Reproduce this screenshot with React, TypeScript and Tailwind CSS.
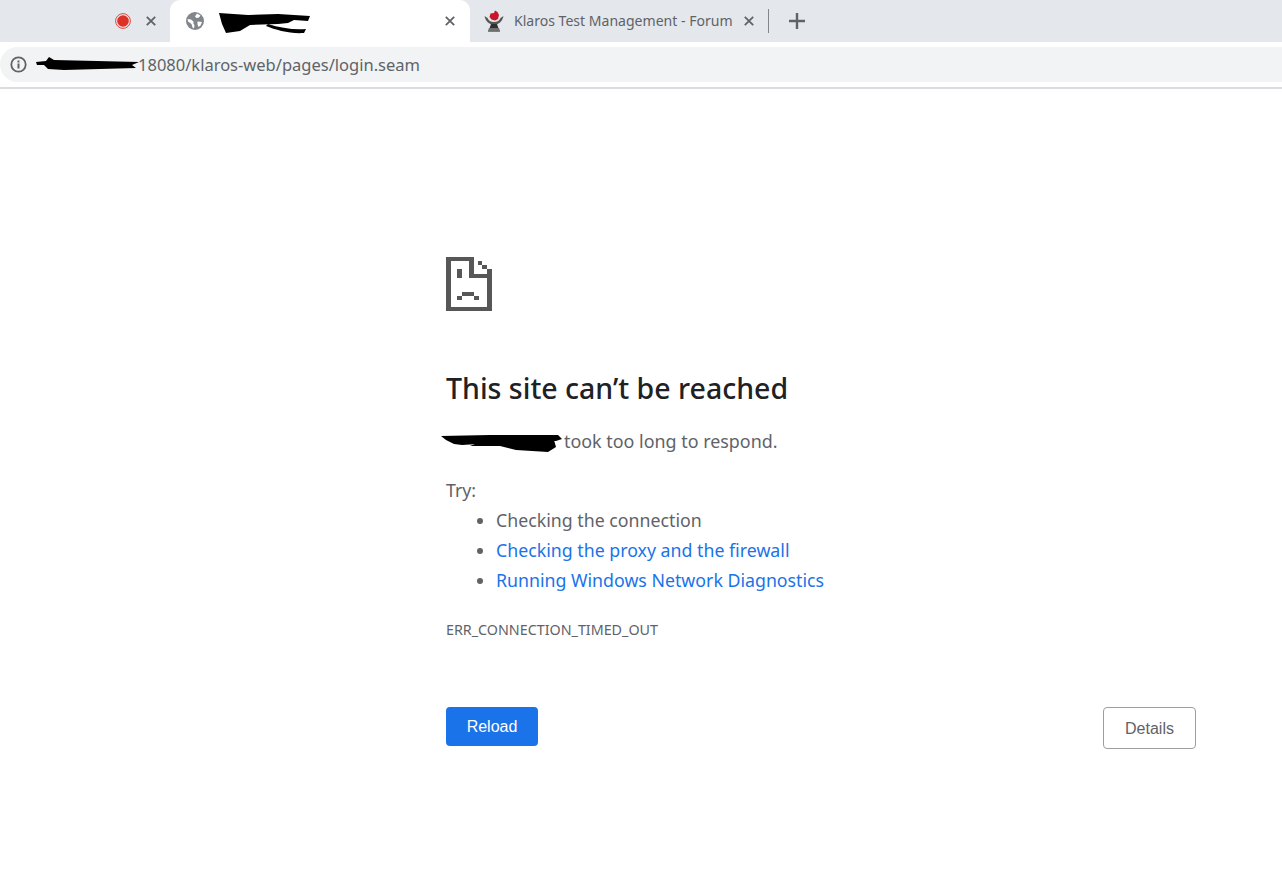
import React from "react";

const bodyFont = "font-['Noto_Sans','Open_Sans',sans-serif]";

function CloseIcon({ className = "" }: { className?: string }) {
  return (
    <svg width="10" height="10" viewBox="0 0 10 10" className={className}>
      <path d="M0.8 0.8 L9.2 9.2 M9.2 0.8 L0.8 9.2" stroke="#5f6368" strokeWidth="1.8" fill="none" />
    </svg>
  );
}

function RecordIcon() {
  return (
    <svg width="16" height="16" viewBox="0 0 16 16">
      <circle cx="8" cy="8" r="7.4" fill="none" stroke="#e8453c" strokeWidth="1" />
      <circle cx="8" cy="8" r="5.8" fill="#dd3126" />
    </svg>
  );
}

function GlobeIcon() {
  return (
    <svg width="18" height="18" viewBox="0 0 18 18">
      <circle cx="9" cy="9" r="9" fill="#80868b" />
      <path d="M1.5 7 L5 7.5 L7.5 9.5 L7.5 12 L8.5 13 L8 16.5 L6.5 15.5 L5.5 12 L2 9.5 Z" fill="#fff" />
      <path d="M11 1.5 L14.5 3.5 L13 5.5 L10.5 6 L9 4.5 Z M11.5 9.5 L16 10 L14.5 13.5 L12.5 15 L11.5 12.5 Z" fill="#fff" />
    </svg>
  );
}

function KlarosIcon() {
  return (
    <svg width="20" height="22" viewBox="0 0 20 22">
      <path d="M0.5 6 C1.5 11 5 14.5 10 14.5 C15 14.5 18.5 11 19.5 6 L16.5 8 C15 11 13 12 10 12 C7 12 5 11 3.5 8 Z" fill="#555" />
      <path d="M7 14 L13 14 L14 17 L16 21.5 L4 21.5 L6 17 Z" fill="#2f2f2f" />
      <path d="M5 18 L15 18 L16 21.5 L4 21.5 Z" fill="#707070" />
      <path d="M6.5 3.5 L10 3 L11 0.5 L13.5 2 L15 5 L14 9 L11 10.5 L7.5 9.5 L5.5 7 Z" fill="#c8172b" />
    </svg>
  );
}

function InfoIcon() {
  return (
    <svg width="17" height="17" viewBox="0 0 17 17">
      <circle cx="8.5" cy="8.5" r="7.2" fill="none" stroke="#5f6368" strokeWidth="1.8" />
      <rect x="7.5" y="7.5" width="2" height="5" fill="#5f6368" />
      <rect x="7.5" y="4.5" width="2" height="2" fill="#5f6368" />
    </svg>
  );
}

function SadFile() {
  return (
    <svg width="46" height="54" viewBox="0 0 46 54" fill="#575757" shapeRendering="crispEdges">
      <rect x="0" y="0" width="28" height="4" />
      <rect x="0" y="0" width="5" height="54" />
      <rect x="0" y="50" width="46" height="4" />
      <rect x="41" y="16" width="5" height="38" />
      <rect x="23" y="0" width="5" height="21" />
      <rect x="23" y="17" width="23" height="4" />
      <rect x="32" y="4" width="4" height="4" />
      <rect x="36" y="8" width="5" height="4" />
      <rect x="41" y="12" width="5" height="4" />
      <rect x="11" y="12" width="5" height="9" />
      <rect x="16" y="35" width="12" height="4" />
      <rect x="11" y="39" width="5" height="4" />
      <rect x="28" y="39" width="5" height="4" />
    </svg>
  );
}

function TabTitleScribble() {
  return (
    <svg width="94" height="22" viewBox="0 0 94 22">
      <path d="M1 1 L30 3 L60 2 L92 4 L90 9 L76 8 L70 11 L60 12 L32 13 L22 19 L8 21 L4 12 Z" fill="#000" />
      <path d="M50 12 C62 16 76 18 88 17 L86 21 C72 22 58 18 48 14 Z" fill="#000" />
    </svg>
  );
}

function UrlScribble() {
  return (
    <svg width="104" height="18" viewBox="0 0 104 18">
      <path d="M0 6 L10 5 L13 1 L18 4 L103 6 L96 9 L100 12 L28 14 L12 13 L8 9 L1 9 Z" fill="#000" />
    </svg>
  );
}

function HostScribble() {
  return (
    <svg width="122" height="22" viewBox="0 0 122 22">
      <path d="M1 3 L50 2 L118 2 L122 6 L116 8 L70 9 L22 12 L14 11 L6 7 Z" fill="#000" />
      <path d="M40 9 L114 7 L116 14 L108 19 L76 17 L60 13 L30 13 Z" fill="#000" />
    </svg>
  );
}

export default function App() {
  return (
    <div className={`min-h-[870px] w-[1282px] overflow-hidden bg-white ${bodyFont}`}>
      {/* tab strip */}
      <div className="flex h-[42px] items-stretch bg-[#e4e7eb]">
        <div className="flex w-[170px] items-center justify-end gap-[15px] pb-[1px] pr-[14px]">
          <RecordIcon />
          <CloseIcon />
        </div>
        <div className="flex w-[300px] items-center rounded-t-[10px] bg-white pb-[1px] pl-[16px] pr-[15px]">
          <GlobeIcon />
          <div className="ml-[14px] flex-1 pt-[4px]">
            <TabTitleScribble />
          </div>
          <CloseIcon />
        </div>
        <div className="flex w-[298px] items-center pb-[1px] pl-[14px] pr-[14px]">
          <KlarosIcon />
          <span className="ml-[10px] flex-1 text-[14.05px] whitespace-nowrap text-[#5f6368]">
            Klaros Test Management - Forum
          </span>
          <CloseIcon />
        </div>
        <div className="my-[9px] w-[1px] bg-[#80868b]" />
        <div className="flex items-center pb-[1px] pl-[20px]">
          <svg width="16" height="16" viewBox="0 0 16 16">
            <path d="M8 0 V16 M0 8 H16" stroke="#5f6368" strokeWidth="2.4" />
          </svg>
        </div>
      </div>

      {/* address bar */}
      <div className="h-[47px] border-b-2 border-[#dadce0] pt-[5px]">
        <div className="flex h-[35px] items-center rounded-l-[18px] bg-[#f1f3f4] pl-[10px]">
          <InfoIcon />
          <div className="ml-[9px] flex items-center">
            <UrlScribble />
          </div>
          <span className="ml-[-2px] pt-[2px] text-[16.5px] text-[#5f6368]">18080/klaros-web/pages/login.seam</span>
        </div>
      </div>

      {/* error page */}
      <div className="ml-[446px] w-[750px] pt-[168px]">
        <SadFile />
        <h1 className="mt-[58px] text-[28.5px] leading-[38px] font-medium text-[#202124]">
          This site can&rsquo;t be reached
        </h1>
        <p className="mt-[19px] flex h-[30px] items-center text-[17.9px] text-[#5f6368]">
          <span className="ml-[-6px] mr-[2px] mt-[5px]">
            <HostScribble />
          </span>
          took too long to respond.
        </p>
        <p className="mt-[19px] text-[17.75px] leading-[30px] text-[#5f6368]">Try:</p>
        <ul className="ml-[50px] list-disc text-[17.75px] leading-[30px] text-[#5f6368] marker:text-[#5f6368]">
          <li>Checking the connection</li>
          <li className="text-[#1a73e8]">Checking the proxy and the firewall</li>
          <li className="text-[#1a73e8]">Running Windows Network Diagnostics</li>
        </ul>
        <p className="mt-[25px] text-[14.3px] leading-[20px] text-[#5f6368]">ERR_CONNECTION_TIMED_OUT</p>
        <div className="mt-[67px] flex items-start justify-between font-['Liberation_Sans',sans-serif]">
          <button className="h-[39px] w-[92px] rounded-[4px] bg-[#1a73e8] text-[16px] text-white">Reload</button>
          <button className="h-[42px] w-[93px] rounded-[4px] border border-[#9e9e9e] bg-white pt-[1px] text-[16px] text-[#5f6368]">
            Details
          </button>
        </div>
      </div>
    </div>
  );
}
